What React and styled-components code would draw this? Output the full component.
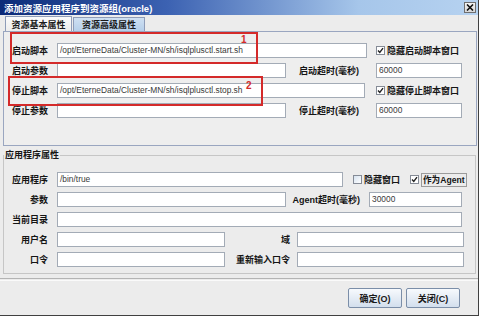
import styled, { createGlobalStyle } from "styled-components";

const GlobalStyle = createGlobalStyle`
  html, body { margin: 0; padding: 0; background: #ffffff; }
  body { font-family: "Liberation Sans", "Noto Sans CJK SC", sans-serif; }
`;

const Window = styled.div`
  position: relative;
  width: 478px;
  height: 315px;
  border-right: 1px solid #404040;
  border-bottom: 1px solid #404040;
  background: #ececec;
  display: flex;
  flex-direction: column;
  overflow: hidden;
`;

const TitleBar = styled.div`
  height: 15px;
  flex: none;
  display: flex;
  align-items: center;
  justify-content: space-between;
  padding: 0 2px 0 4px;
  background: linear-gradient(to right, #0c2a78, #3c62b2 35%, #a6c6ea 75%, #b6d2f0);
  color: #ffffff;
  font: bold 9.5px "Liberation Sans", "Noto Sans CJK SC", sans-serif;
`;

const CloseButton = styled.div`
  width: 12px;
  height: 11px;
  box-sizing: border-box;
  border: 1px solid #6f6f6f;
  background: linear-gradient(#f4f4f4, #d8d8d8);
  display: flex;
  align-items: center;
  justify-content: center;
`;

const TabStrip = styled.div`
  height: 16px;
  flex: none;
  display: flex;
  align-items: flex-end;
  padding-left: 5px;
  gap: 1px;
`;

const Tab = styled.div`
  box-sizing: border-box;
  width: ${(p) => p.$w}px;
  height: ${(p) => (p.$active ? 15 : 14)}px;
  border: 1px solid #8e9cb8;
  border-bottom: none;
  background: ${(p) =>
    p.$active ? "linear-gradient(#fbfbfb, #ededed)" : "linear-gradient(#cfe0f2, #b6cfea)"};
  display: flex;
  align-items: center;
  justify-content: center;
  font: bold 9px "Liberation Sans", "Noto Sans CJK SC", sans-serif;
  color: #1a1a1a;
`;

const Panel = styled.div`
  box-sizing: border-box;
  flex: none;
  margin-left: 3px;
  width: 474px;
  height: 115px;
  border: 1px solid #9aa6c0;
  background: #eeeeee;
  padding: 11px 0 0 8px;
  display: flex;
  flex-direction: column;
  gap: 5px;
`;

const Row = styled.div`
  height: 15px;
  display: flex;
  align-items: center;
`;

const Label = styled.span`
  box-sizing: border-box;
  flex: none;
  width: ${(p) => p.$w}px;
  padding-right: ${(p) => p.$pr || 0}px;
  text-align: ${(p) => p.$align || "left"};
  font: bold 9px "Liberation Sans", "Noto Sans CJK SC", sans-serif;
  color: #151515;
  white-space: nowrap;
`;

const Field = styled.div`
  box-sizing: border-box;
  flex: none;
  width: ${(p) => p.$w}px;
  height: 15px;
  margin-left: ${(p) => p.$ml || 0}px;
  background: #ffffff;
  border: 1px solid #a3abb6;
  padding-left: 2px;
  font: 8.4px/13px "Liberation Sans", sans-serif;
  color: #3a3a3a;
  white-space: nowrap;
  overflow: hidden;
`;

const CheckItem = styled.div`
  display: flex;
  align-items: center;
  gap: 2px;
  margin-left: ${(p) => p.$ml || 0}px;
  font: bold 9px "Liberation Sans", "Noto Sans CJK SC", sans-serif;
  color: #151515;
  white-space: nowrap;
`;

const Box = styled.span`
  box-sizing: border-box;
  width: 9px;
  height: 9px;
  border: 1px solid #858b96;
  background: ${(p) => (p.$checked ? "#ffffff" : "linear-gradient(135deg, #d6e2ef, #ffffff)")};
  display: flex;
  align-items: center;
  justify-content: center;
`;

const Focus = styled.span`
  border: 1px solid #9b9b9b;
  padding: 0 1px;
  line-height: 12px;
  font-size: 8.6px;
`;

const Group = styled.fieldset`
  margin: 3px 2px 0 3px;
  border: 1px solid #c6c6c6;
  padding: 11px 0 6px 0;
  display: flex;
  flex-direction: column;
  gap: 5px;
  min-width: 0;
`;

const Legend = styled.legend`
  padding: 0 1px;
  font: bold 9px/12px "Liberation Sans", "Noto Sans CJK SC", sans-serif;
  color: #151515;
`;

const Separator = styled.div`
  margin-top: 4px;
  height: 1px;
  flex: none;
  border-top: 1px solid #b4b4b4;
  border-bottom: 1px solid #fafafa;
`;

const ButtonBar = styled.div`
  display: flex;
  justify-content: flex-end;
  gap: 4px;
  padding: 7px 18px 0 0;
`;

const Button = styled.div`
  box-sizing: border-box;
  width: 54px;
  height: 20px;
  border: 1px solid #7b8ea8;
  border-radius: 2px;
  background: linear-gradient(#f7fafd, #d3dfed);
  display: flex;
  align-items: center;
  justify-content: center;
  font: bold 9px "Liberation Sans", "Noto Sans CJK SC", sans-serif;
  color: #1a1a1a;
`;

const Mark = styled.div`
  position: absolute;
  left: ${(p) => p.$x}px;
  top: ${(p) => p.$y}px;
  width: ${(p) => p.$w}px;
  height: ${(p) => p.$h}px;
  box-sizing: border-box;
  border: 2px solid #d42a2a;
  pointer-events: none;
`;

const MarkNum = styled.span`
  position: absolute;
  left: ${(p) => p.$x}px;
  top: ${(p) => p.$y}px;
  font: bold 10px "Liberation Sans", sans-serif;
  color: #d42a2a;
`;

const Check = () => (
  <svg width="7" height="7" viewBox="0 0 7 7">
    <path d="M1 3.5 L2.8 5.5 L6 1.2" fill="none" stroke="#222" strokeWidth="1.4" />
  </svg>
);

const CheckBox = ({ checked, children, ml, focus }) => (
  <CheckItem $ml={ml}>
    <Box $checked={checked}>{checked && <Check />}</Box>
    {focus ? <Focus>{children}</Focus> : children}
  </CheckItem>
);

const App = () => {
  return (
    <Window>
      <GlobalStyle />
      <TitleBar>
        <span>添加资源应用程序到资源组(oracle)</span>
        <CloseButton>
          <svg width="8" height="7" viewBox="0 0 8 7">
            <path d="M1 0.5 L7 6.5 M7 0.5 L1 6.5" stroke="#111" strokeWidth="1.6" />
          </svg>
        </CloseButton>
      </TitleBar>
      <TabStrip>
        <Tab $w={67} $active>资源基本属性</Tab>
        <Tab $w={72}>资源高级属性</Tab>
      </TabStrip>
      <Panel>
        <Row>
          <Label $w={45}>启动脚本</Label>
          <Field $w={310}>/opt/EterneData/Cluster-MN/sh/isqlplusctl.start.sh</Field>
          <CheckBox checked ml={9}>隐藏启动脚本窗口</CheckBox>
        </Row>
        <Row>
          <Label $w={45}>启动参数</Label>
          <Field $w={229} />
          <Label $w={73} $align="right">启动超时(毫秒)</Label>
          <Field $w={86} $ml={17}>60000</Field>
        </Row>
        <Row>
          <Label $w={45}>停止脚本</Label>
          <Field $w={308}>/opt/EterneData/Cluster-MN/sh/isqlplusctl.stop.sh</Field>
          <CheckBox checked ml={11}>隐藏停止脚本窗口</CheckBox>
        </Row>
        <Row>
          <Label $w={45}>停止参数</Label>
          <Field $w={229} />
          <Label $w={73} $align="right">停止超时(毫秒)</Label>
          <Field $w={86} $ml={17}>60000</Field>
        </Row>
      </Panel>
      <Group>
        <Legend>应用程序属性</Legend>
        <Row>
          <Label $w={53} $pr={9} $align="right">应用程序</Label>
          <Field $w={286}>/bin/true</Field>
          <CheckBox ml={10}>隐藏窗口</CheckBox>
          <CheckBox checked focus ml={10}>作为Agent</CheckBox>
        </Row>
        <Row>
          <Label $w={53} $pr={9} $align="right">参数</Label>
          <Field $w={229} />
          <Label $w={74} $align="right">Agent超时(毫秒)</Label>
          <Field $w={93} $ml={9}>30000</Field>
        </Row>
        <Row>
          <Label $w={53} $pr={9} $align="right">当前目录</Label>
          <Field $w={405} />
        </Row>
        <Row>
          <Label $w={53} $pr={9} $align="right">用户名</Label>
          <Field $w={168} />
          <Label $w={65} $align="right">域</Label>
          <Field $w={167} $ml={7} />
        </Row>
        <Row>
          <Label $w={53} $pr={9} $align="right">口令</Label>
          <Field $w={168} />
          <Label $w={65} $align="right">重新输入口令</Label>
          <Field $w={167} $ml={7} />
        </Row>
      </Group>
      <Separator />
      <ButtonBar>
        <Button>确定(O)</Button>
        <Button>关闭(C)</Button>
      </ButtonBar>
      <Mark $x={10} $y={32} $w={248} $h={32} />
      <MarkNum $x={241} $y={34}>1</MarkNum>
      <Mark $x={8} $y={76} $w={255} $h={30} />
      <MarkNum $x={246} $y={80}>2</MarkNum>
    </Window>
  );
};

export default App;
